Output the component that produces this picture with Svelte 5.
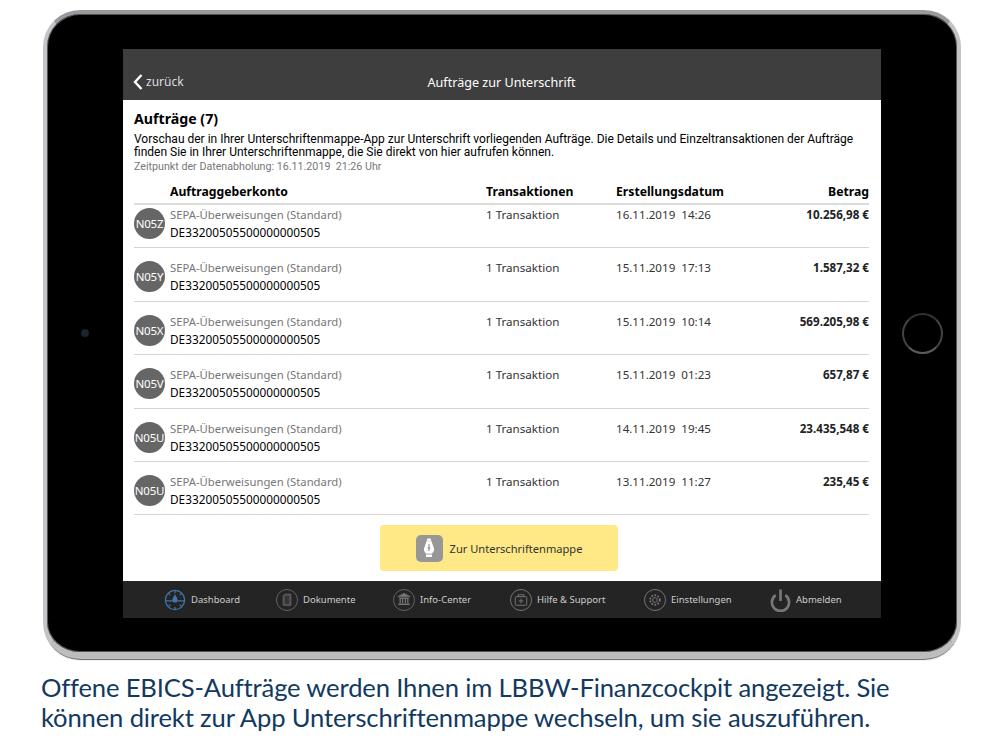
<script>
  const orders = [
    { id: 'N05Z', date: '16.11.2019  14:26', amount: '10.256,98 €' },
    { id: 'N05Y', date: '15.11.2019  17:13', amount: '1.587,32 €' },
    { id: 'N05X', date: '15.11.2019  10:14', amount: '569.205,98 €' },
    { id: 'N05V', date: '15.11.2019  01:23', amount: '657,87 €' },
    { id: 'N05U', date: '14.11.2019  19:45', amount: '23.435,548 €' },
    { id: 'N05U', date: '13.11.2019  11:27', amount: '235,45 €' },
  ];
</script>

<div class="page">
  <div class="tablet">
    <div class="camera"></div>
    <div class="home"></div>
    <div class="screen">
      <header class="topbar">
        <div class="back">
          <svg width="10" height="16" viewBox="0 0 10 16"><path d="M8.5 1 L2 8 L8.5 15" fill="none" stroke="#fff" stroke-width="2.4"/></svg>
          <span>zurück</span>
        </div>
        <div class="title">Aufträge zur Unterschrift</div>
      </header>

      <main class="content">
        <h1>Aufträge (7)</h1>
        <p class="intro">Vorschau der in Ihrer Unterschriftenmappe-App zur Unterschrift vorliegenden Aufträge. Die Details und Einzeltransaktionen der Aufträge<br />finden Sie in Ihrer Unterschriftenmappe, die Sie direkt von hier aufrufen können.</p>
        <p class="stamp">Zeitpunkt der Datenabholung: 16.11.2019  21:26 Uhr</p>

        <div class="row head">
          <div></div>
          <div>Auftraggeberkonto</div>
          <div>Transaktionen</div>
          <div>Erstellungsdatum</div>
          <div class="right">Betrag</div>
        </div>
        {#each orders as o}
          <div class="row item">
            <div class="badge">{o.id}</div>
            <div class="account">
              <div class="type">SEPA-Überweisungen (Standard)</div>
              <div class="iban">DE33200505500000000505</div>
            </div>
            <div class="cell">1 Transaktion</div>
            <div class="cell">{o.date}</div>
            <div class="cell right amount">{o.amount}</div>
          </div>
        {/each}

        <div class="action">
          <div class="cta">
            <span class="cta-icon">
              <svg width="16" height="22" viewBox="0 0 16 22">
                <path d="M6.500 1.500h3l3.500 10c.5 2-1 4-2 5v3.500H5v-3.500c-1-1-2.500-3-2-5z" fill="#fff"/>
                <path d="M6.200 4h3.600" stroke="#e3c4c4" stroke-width=".8"/>
                <path d="M8 7v7M6.600 11h2.800" stroke="#8a8a8a" stroke-width="1.100"/>
                <path d="M5 17h6" stroke="#8a8a8a" stroke-width=".8"/>
              </svg>
            </span>
            <span>Zur Unterschriftenmappe</span>
          </div>
        </div>
      </main>

      <nav class="bottombar">
        <div class="nav" style="width: 153px; padding-left: 41px">
          <svg width="22" height="22" viewBox="0 0 24 24" fill="none" stroke="#3f78ad" stroke-width="1.300">
            <circle cx="12" cy="12" r="10.500"/>
            <path d="M12 1.500v3M4.500 4.500l2.200 2.200M19.500 4.500l-2.200 2.200M5 19l2-2M19 19l-2-2M12 19.500v3M1.500 13h8M14.500 13h8"/>
            <path d="M12 7c1 2 2.200 3.500 2.200 5a2.200 2.200 0 0 1-4.400 0C9.800 10.500 11 9 12 7z" fill="#3f78ad"/>
          </svg>
          <span>Dashboard</span>
        </div>
        <div class="nav" style="width: 117px">
          <svg width="22" height="22" viewBox="0 0 23 23" fill="none" stroke="#666" stroke-width="1">
            <circle cx="11.500" cy="11.500" r="11"/>
            <path d="M9 5.500h6.500v11.500H7.500V7z" fill="#4a4a4a"/>
            <path d="M9.500 8.500h4M9.500 10.500h4M9.500 12.500h4M9.500 14.500h4" stroke="#222"/>
          </svg>
          <span>Dokumente</span>
        </div>
        <div class="nav" style="width: 117px">
          <svg width="22" height="22" viewBox="0 0 23 23" fill="none" stroke="#666" stroke-width="1">
            <circle cx="11.500" cy="11.500" r="11"/>
            <path d="M11.500 4.500l6.500 3.500H5z" fill="#777"/>
            <path d="M6.500 9.500h10M7.500 10v5M10 10v5M13 10v5M15.500 10v5" stroke="#777" stroke-width="1.300"/>
            <path d="M5.500 16h12" stroke="#777" stroke-width="1.500"/>
          </svg>
          <span>Info-Center</span>
        </div>
        <div class="nav" style="width: 134px">
          <svg width="22" height="22" viewBox="0 0 23 23" fill="none" stroke="#777" stroke-width="1">
            <circle cx="11.500" cy="11.500" r="11"/>
            <rect x="5.500" y="8" width="12" height="9" rx="1"/>
            <path d="M8.500 8V6h6v2M11.500 10v5M9 12.500h5"/>
          </svg>
          <span>Hilfe &amp; Support</span>
        </div>
        <div class="nav" style="width: 126px">
          <svg width="22" height="22" viewBox="0 0 23 23" fill="none" stroke="#777" stroke-width="1">
            <circle cx="11.500" cy="11.500" r="11"/>
            <circle cx="11.500" cy="11.500" r="2.500"/>
            <circle cx="11.500" cy="11.500" r="5" stroke-width="1.800" stroke-dasharray="1.800 1.400"/>
          </svg>
          <span>Einstellungen</span>
        </div>
        <div class="nav">
          <svg width="21" height="24" viewBox="0 0 22 24" fill="none" stroke="#777" stroke-width="2.800">
            <path d="M6 7a9 9 0 1 0 10 0"/>
            <path d="M11 1v12"/>
          </svg>
          <span>Abmelden</span>
        </div>
      </nav>
    </div>
  </div>

  <p class="caption">Offene EBICS-Aufträge werden Ihnen im LBBW-Finanzcockpit angezeigt. Sie<br />können direkt zur App Unterschriftenmappe wechseln, um sie auszuführen.</p>
</div>

<style>
  :global(body) {
    margin: 0;
    background: #fff;
  }

  .page {
    width: 1000px;
    height: 750px;
    overflow: hidden;
    padding-top: 10px;
    box-sizing: border-box;
    font-family: "Noto Sans", sans-serif;
  }

  .tablet {
    position: relative;
    width: 918px;
    height: 649px;
    margin-left: 43px;
    box-sizing: border-box;
    padding: 35px 76px 0;
    background: #000;
    border-radius: 37px;
    border-style: solid;
    border-width: 4px 4px 7px;
    border-color: #9a9a9e #c4c4c8 #bdbdbd;
    box-shadow: 0 2px 1px -1px #666, inset 0 0 0 1px #555;
  }

  .camera {
    position: absolute;
    left: 34px;
    top: 315px;
    width: 8px;
    height: 8px;
    border-radius: 50%;
    background: #1a222c;
  }

  .home {
    position: absolute;
    left: 855px;
    top: 299px;
    width: 41px;
    height: 41px;
    box-sizing: border-box;
    border-radius: 50%;
    border: 2px solid #444;
    border-bottom-color: #5c5c5c;
    border-top-color: #333;
  }

  .screen {
    width: 758px;
    height: 569px;
    display: flex;
    flex-direction: column;
    background: #fff;
  }

  .topbar {
    position: relative;
    height: 51px;
    background: #3e3e3e;
    color: #fff;
    font-size: 12.600px;
    display: flex;
    align-items: flex-end;
    justify-content: center;
    padding-bottom: 9px;
    box-sizing: border-box;
    flex-shrink: 0;
  }

  .title {
    margin-left: -1px;
  }

  .back {
    position: absolute;
    left: 10px;
    bottom: 10px;
    display: flex;
    align-items: center;
    gap: 3px;
    color: #ddd;
    font-size: 12px;
  }

  .content {
    flex: 1;
    padding: 10px 12px 0 11px;
    color: #000;
  }

  h1 {
    margin: 0;
    font-size: 14.200px;
    font-weight: 700;
    line-height: 18px;
  }

  .intro {
    margin: 5px 0 0;
    font-family: Roboto, sans-serif;
    font-size: 12px;
    line-height: 13px;
    white-space: nowrap;
  }

  .stamp {
    margin: 0;
    font-family: Roboto, sans-serif;
    font-size: 10.700px;
    line-height: 16px;
    color: #777;
    white-space: pre;
  }

  .row {
    display: grid;
    grid-template-columns: 36px 316px 130px 1fr 110px;
    align-items: start;
  }

  .head {
    margin-top: 9px;
    height: 21px;
    font-size: 12.200px;
    font-weight: 700;
    line-height: 16px;
    border-bottom: 2px solid #dcdcdc;
    box-sizing: border-box;
  }

  .item {
    height: 53.400px;
    box-sizing: border-box;
    border-bottom: 1px solid #d4d4d4;
    padding-top: 12px;
  }

  .head + .item {
    height: 43.400px;
    padding-top: 2px;
  }

  .badge {
    width: 31px;
    height: 31px;
    margin-top: 1px;
    border-radius: 50%;
    background: #666;
    color: #fff;
    font-size: 11.500px;
    text-align: center;
    line-height: 31px;
    letter-spacing: -0.200px;
  }

  .type {
    font-size: 11.300px;
    line-height: 15px;
    color: #777;
  }

  .iban {
    margin-top: 3px;
    font-size: 11.800px;
    line-height: 15px;
  }

  .cell {
    font-size: 11.600px;
    line-height: 16px;
    color: #333;
    white-space: pre;
  }

  .right {
    text-align: right;
  }

  .amount {
    font-weight: 700;
    color: #222;
  }

  .action {
    display: flex;
    justify-content: center;
    padding-top: 10px;
  }

  .cta {
    width: 238px;
    height: 46px;
    margin-left: -5px;
    display: flex;
    align-items: center;
    justify-content: center;
    gap: 7px;
    background: #fee986;
    border-radius: 4px;
    font-size: 11.100px;
    color: #333;
  }

  .cta-icon {
    width: 27px;
    height: 27px;
    border-radius: 5px;
    background: #979797;
    display: flex;
    align-items: center;
    justify-content: center;
  }

  .bottombar {
    height: 37px;
    flex-shrink: 0;
    box-sizing: border-box;
    background: #242424;
    display: flex;
    align-items: center;
    color: #ccc;
    font-size: 9.500px;
  }

  .nav {
    display: flex;
    align-items: center;
    gap: 5px;
    box-sizing: border-box;
  }

  .caption {
    margin: 13px 0 0 41px;
    font-family: Lato, sans-serif;
    font-size: 25.600px;
    letter-spacing: -0.150px;
    line-height: 30px;
    color: #12395f;
    white-space: nowrap;
  }
</style>
